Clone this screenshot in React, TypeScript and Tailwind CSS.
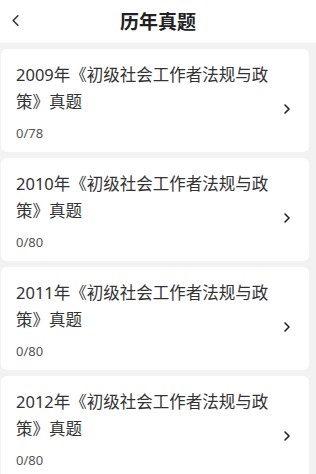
import { ChevronLeft, ChevronRight } from "lucide-react";

const papers = [
  { year: 2009, done: 0, total: 78 },
  { year: 2010, done: 0, total: 80 },
  { year: 2011, done: 0, total: 80 },
  { year: 2012, done: 0, total: 80 },
];

const App = () => {
  return (
    <div
      className="w-[316px] h-[474px] overflow-hidden bg-[#f2f2f2]"
      style={{ fontFamily: '"Noto Sans", "Noto Sans CJK SC", sans-serif' }}
    >
      <header className="h-[43px] bg-white flex items-center relative">
        <ChevronLeft className="absolute left-[6px] top-[11px] w-[19px] h-[19px] text-[#333]" strokeWidth={2} />
        <h1 className="w-full text-center text-[19px] font-bold text-[#222] leading-[40px]">历年真题</h1>
      </header>

      <div className="flex flex-col gap-[6px] pt-[6px] pl-[1px] w-[309px]">
        {papers.map((p) => (
          <div key={p.year} className="bg-white rounded-[6px] h-[103px] pl-[15px] pr-[14px] flex items-center">
            <div className="flex-1 pt-[2px]">
              <p className="text-[16.5px] leading-[27px] text-[#333] w-[262px]">
                {p.year}年《初级社会工作者法规与政策》真题
              </p>
              <p className="text-[13px] leading-[18px] text-[#555] mt-[9px]">
                {p.done}/{p.total}
              </p>
            </div>
            <ChevronRight className="w-[16px] h-[16px] text-[#222] mt-[16px]" strokeWidth={2.4} />
          </div>
        ))}
      </div>
    </div>
  );
};

export default App;
